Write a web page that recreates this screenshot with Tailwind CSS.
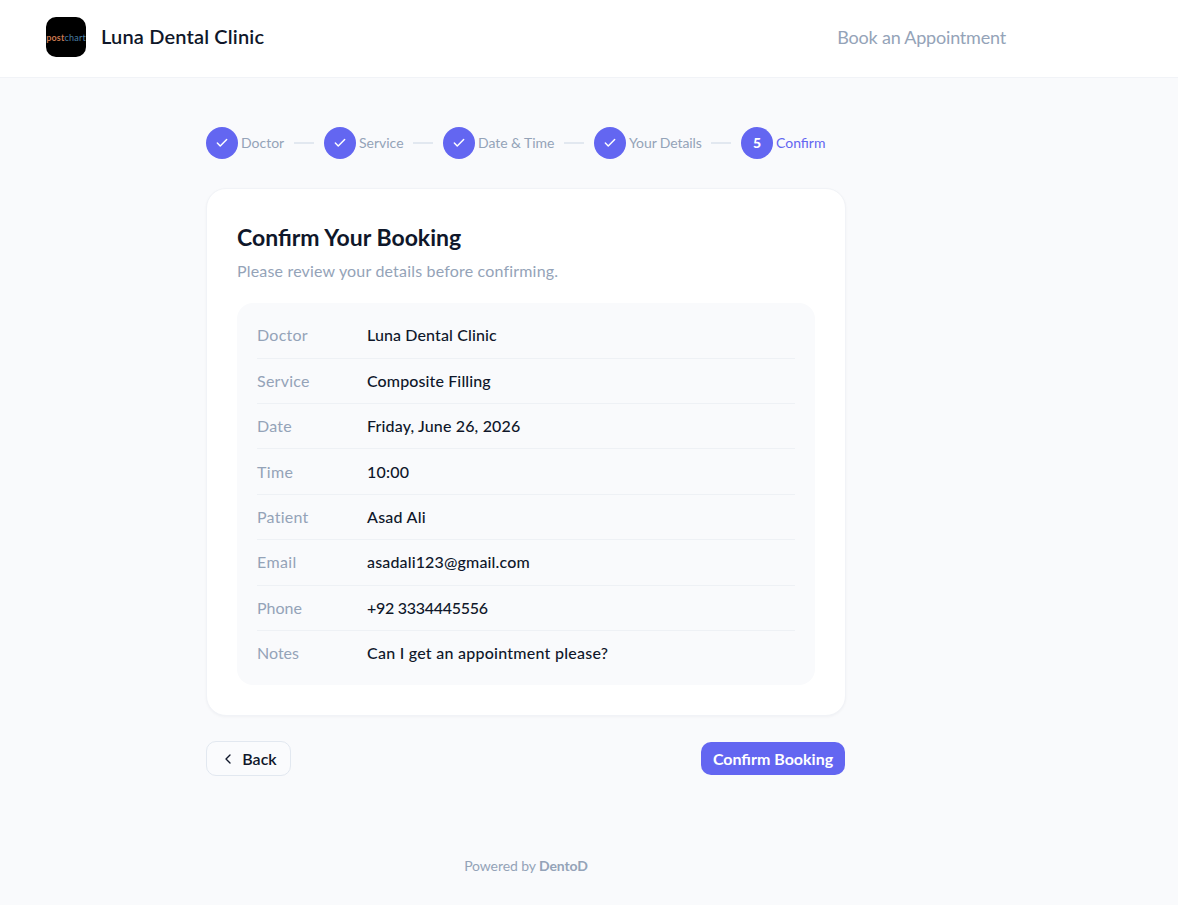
<!DOCTYPE html>
<html lang="en">
<head>
    <meta charset="UTF-8">
    <meta name="viewport" content="width=device-width, initial-scale=1.0">
    <title>Luna Dental Clinic</title>
    <script src="https://cdn.jsdelivr.net/npm/@tailwindcss/browser@4"></script>
</head>
<body class="bg-[#f9fafc] font-['Lato',sans-serif] text-[#0f172a] min-h-[905px] overflow-hidden">
    <!-- Header -->
    <header class="bg-white border-b border-[#f1f3f7] h-[78px]">
        <div class="w-[1052px] pt-[17px] px-[46px] flex items-start justify-between">
            <div class="flex items-center gap-[15px] h-10">
                <div class="w-10 h-10 rounded-[10px] bg-black flex items-center justify-center overflow-hidden">
                    <span class="text-[9px] font-bold leading-none tracking-[0.2px] text-[#c9784f]">post<span class="font-normal text-[#4a7fa0]">chart</span></span>
                </div>
                <span class="text-xl font-semibold tracking-[0.17px] -mt-0.5">Luna Dental Clinic</span>
            </div>
            <span class="text-[#94a3b8] text-lg tracking-[-0.2px] leading-10">Book an Appointment</span>
        </div>
    </header>

    <main class="w-[1052px] flex flex-col items-center pt-[49px]">
        <div class="w-[640px]">
            <!-- Stepper -->
            <div class="flex items-center h-8 text-sm text-[#94a3b8]">
                <div class="w-8 h-8 rounded-full bg-[#6366f1] flex items-center justify-center"><svg class="w-3.5 h-3.5" viewBox="0 0 24 24" fill="none" stroke="white" stroke-width="2.5" stroke-linecap="round" stroke-linejoin="round"><path d="M20 6 9 17l-5-5"/></svg></div>
                <span class="ml-[3px] w-[43px] whitespace-nowrap">Doctor</span>
                <div class="mx-2.5 w-5 h-0.5 bg-[#e2e8f0]"></div>
                <div class="w-8 h-8 rounded-full bg-[#6366f1] flex items-center justify-center"><svg class="w-3.5 h-3.5" viewBox="0 0 24 24" fill="none" stroke="white" stroke-width="2.5" stroke-linecap="round" stroke-linejoin="round"><path d="M20 6 9 17l-5-5"/></svg></div>
                <span class="ml-[3px] w-11 whitespace-nowrap">Service</span>
                <div class="mx-2.5 w-5 h-0.5 bg-[#e2e8f0]"></div>
                <div class="w-8 h-8 rounded-full bg-[#6366f1] flex items-center justify-center"><svg class="w-3.5 h-3.5" viewBox="0 0 24 24" fill="none" stroke="white" stroke-width="2.5" stroke-linecap="round" stroke-linejoin="round"><path d="M20 6 9 17l-5-5"/></svg></div>
                <span class="ml-[3px] w-[76px] whitespace-nowrap tracking-[-0.05px]">Date &amp; Time</span>
                <div class="mx-2.5 w-5 h-0.5 bg-[#e2e8f0]"></div>
                <div class="w-8 h-8 rounded-full bg-[#6366f1] flex items-center justify-center"><svg class="w-3.5 h-3.5" viewBox="0 0 24 24" fill="none" stroke="white" stroke-width="2.5" stroke-linecap="round" stroke-linejoin="round"><path d="M20 6 9 17l-5-5"/></svg></div>
                <span class="ml-[3px] w-[72px] whitespace-nowrap tracking-[-0.1px]">Your Details</span>
                <div class="mx-2.5 w-5 h-0.5 bg-[#e2e8f0]"></div>
                <div class="w-8 h-8 rounded-full bg-[#6366f1] flex items-center justify-center text-white font-black text-sm">5</div>
                <span class="ml-[3px] text-[#6366f1]">Confirm</span>
            </div>

            <!-- Card -->
            <div class="mt-[29px] bg-white border border-[#f1f3f7] rounded-[20px] p-[30px] shadow-[0_1px_3px_rgba(15,23,42,0.04)]">
                <h1 class="text-[23px] font-bold leading-[36px]">Confirm Your Booking</h1>
                <p class="mt-1 text-[#94a3b8] text-base leading-6 tracking-[0.18px]">Please review your details before confirming.</p>
                <div class="mt-5 bg-[#f9fafc] rounded-2xl px-5 pt-[10.3px] pb-[10px] text-base">
                    <div class="flex h-[45.4px] items-center border-b border-[#eef1f5]"><span class="w-[110px] text-[#94a3b8] tracking-[0.25px]">Doctor</span><span class="font-medium tracking-[0.12px]">Luna Dental Clinic</span></div>
                    <div class="flex h-[45.4px] items-center border-b border-[#eef1f5]"><span class="w-[110px] text-[#94a3b8] tracking-[0.25px]">Service</span><span class="font-medium tracking-[0.12px]">Composite Filling</span></div>
                    <div class="flex h-[45.4px] items-center border-b border-[#eef1f5]"><span class="w-[110px] text-[#94a3b8] tracking-[0.25px]">Date</span><span class="font-medium tracking-[0.15px]">Friday, June 26, 2026</span></div>
                    <div class="flex h-[45.4px] items-center border-b border-[#eef1f5]"><span class="w-[110px] text-[#94a3b8] tracking-[0.4px]">Time</span><span class="font-medium tracking-[0.2px]">10:00</span></div>
                    <div class="flex h-[45.4px] items-center border-b border-[#eef1f5]"><span class="w-[110px] text-[#94a3b8] tracking-[0.25px]">Patient</span><span class="font-medium tracking-[0.25px]">Asad Ali</span></div>
                    <div class="flex h-[45.4px] items-center border-b border-[#eef1f5]"><span class="w-[110px] text-[#94a3b8] tracking-[0.4px]">Email</span><span class="font-medium tracking-[0.15px]">asadali123@gmail.com</span></div>
                    <div class="flex h-[45.4px] items-center border-b border-[#eef1f5]"><span class="w-[110px] text-[#94a3b8]">Phone</span><span class="font-medium tracking-[-0.28px]">+92 3334445556</span></div>
                    <div class="flex h-[44.4px] items-center"><span class="w-[110px] text-[#94a3b8]">Notes</span><span class="font-medium tracking-[0.25px]">Can I get an appointment please?</span></div>
                </div>
            </div>

            <!-- Actions -->
            <div class="mt-[24.7px] flex items-center justify-between">
                <button class="h-[35px] w-[85px] border border-[#e2e8f0] rounded-[10px] bg-[#fafbfd] flex items-center justify-center gap-1.5 font-semibold text-base">
                    <svg class="w-4 h-4" viewBox="0 0 24 24" fill="none" stroke="currentColor" stroke-width="2" stroke-linecap="round" stroke-linejoin="round"><path d="m15 18-6-6 6-6"/></svg>
                    Back
                </button>
                <button class="mr-px h-[33px] w-[144px] rounded-[10px] bg-[#6366f1] text-white font-bold text-base">Confirm Booking</button>
            </div>

            <p class="mt-[80px] text-center text-sm tracking-[-0.1px] text-[#94a3b8]">Powered by <span class="font-bold">DentoD</span></p>
        </div>
    </main>
</body>
</html>
